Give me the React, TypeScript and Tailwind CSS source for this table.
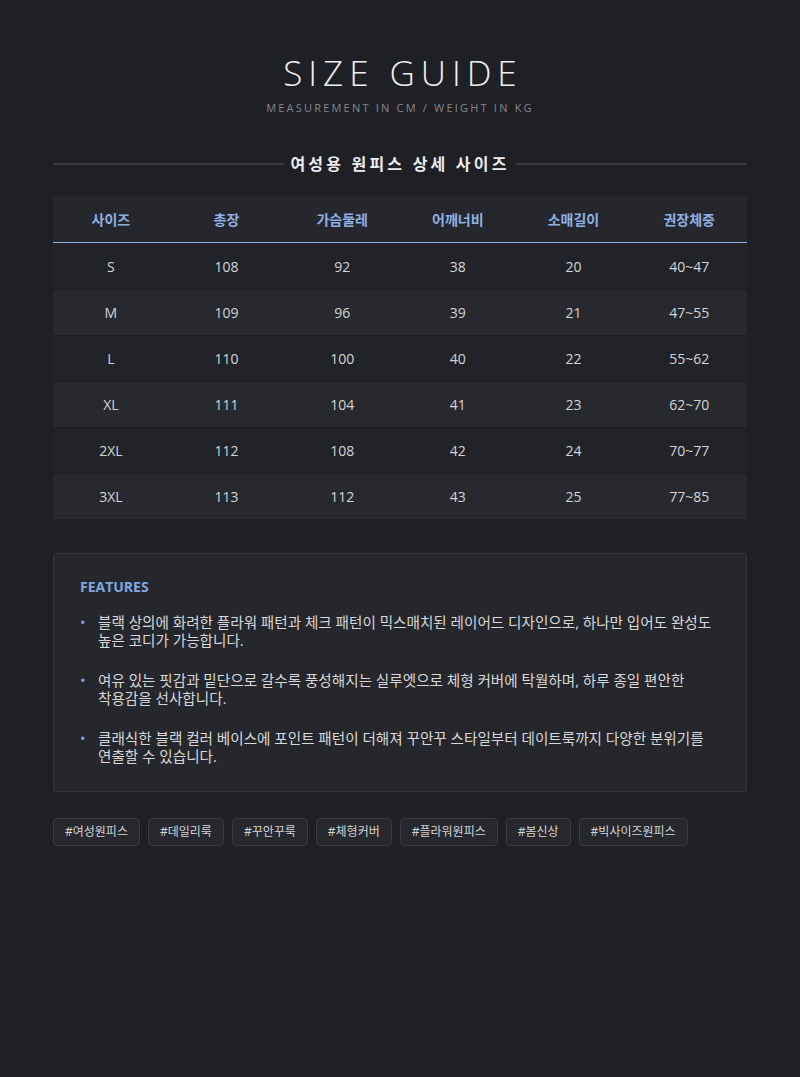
const rows = [
  ["S", "108", "92", "38", "20", "40~47"],
  ["M", "109", "96", "39", "21", "47~55"],
  ["L", "110", "100", "40", "22", "55~62"],
  ["XL", "111", "104", "41", "23", "62~70"],
  ["2XL", "112", "108", "42", "24", "70~77"],
  ["3XL", "113", "112", "43", "25", "77~85"],
]

const heads = ["사이즈", "총장", "가슴둘레", "어깨너비", "소매길이", "권장체중"]

const features = [
  "블랙 상의에 화려한 플라워 패턴과 체크 패턴이 믹스매치된 레이어드 디자인으로, 하나만 입어도 완성도 높은 코디가 가능합니다.",
  "여유 있는 핏감과 밑단으로 갈수록 풍성해지는 실루엣으로 체형 커버에 탁월하며, 하루 종일 편안한 착용감을 선사합니다.",
  "클래식한 블랙 컬러 베이스에 포인트 패턴이 더해져 꾸안꾸 스타일부터 데이트룩까지 다양한 분위기를 연출할 수 있습니다.",
]

const tags = ["#여성원피스", "#데일리룩", "#꾸안꾸룩", "#체형커버", "#플라워원피스", "#봄신상", "#빅사이즈원피스"]

export default function App() {
  return (
    <div className="min-h-[1077px] w-full bg-[#1f2026] px-[53px] pt-[51px] font-['Open_Sans','Noto_Sans_CJK_KR',sans-serif] text-[#d4d4d6]">
      <div className="flex flex-col items-center">
        <h1 className="pl-[0.17em] text-[35px] font-light leading-[44px] tracking-[0.17em] text-[#eeeef0]">SIZE GUIDE</h1>
        <p className="mt-[5px] text-[11px] leading-[16px] tracking-[0.2em] text-[#85878e]">MEASUREMENT IN CM / WEIGHT IN KG</p>
      </div>

      <div className="mt-[37px] flex items-center gap-[6px]">
        <div className="h-[2px] flex-1 bg-[#3a3b41]" />
        <span className="text-[16px] font-bold leading-[22px] tracking-[0.2em] text-[#ececee]">여성용 원피스 상세 사이즈</span>
        <div className="h-[2px] flex-1 bg-[#3a3b41]" />
      </div>

      <div className="mt-[21px] bg-[#232429]">
        <div className="grid h-[47px] grid-cols-6 items-center border-b border-[#8fb0e4] bg-[#26272c]">
          {heads.map(h => (
            <div key={h} className="text-center text-[14px] font-semibold text-[#8fb0e4]">{h}</div>
          ))}
        </div>
        {rows.map((r, i) => (
          <div key={r[0]} className={`grid h-[46px] grid-cols-6 items-center ${i % 2 ? "bg-[#28292e]" : "bg-[#222328]"} ${i > 0 ? "border-t border-[#1d1e22]" : ""}`}>
            {r.map((c, j) => (
              <div key={j} className="text-center text-[14px] text-[#d4d4d6]">{c}</div>
            ))}
          </div>
        ))}
      </div>

      <div className="mt-[34px] rounded-[3px] border border-[#34353b] bg-[#26272c] px-[26px] pt-[21px] pb-[26px]">
        <h2 className="text-[14px] font-bold leading-[24px] text-[#7fa6e2]">FEATURES</h2>
        <ul className="mt-[14px] flex flex-col gap-[22px]">
          {features.map(f => (
            <li key={f} className="flex break-keep text-[14.6px] leading-[18px] text-[#d8d8da]">
              <span className="w-[18px] shrink-0 text-[#7fa6e2]">•</span>
              <span>{f}</span>
            </li>
          ))}
        </ul>
      </div>

      <div className="mt-[26px] flex flex-wrap gap-[8px]">
        {tags.map(t => (
          <span key={t} className="h-[28px] rounded-[4px] border border-[#3b3c42] bg-[#27282d] px-[11px] text-[12px] leading-[26px] text-[#d4d4d6]">{t}</span>
        ))}
      </div>
    </div>
  )
}
